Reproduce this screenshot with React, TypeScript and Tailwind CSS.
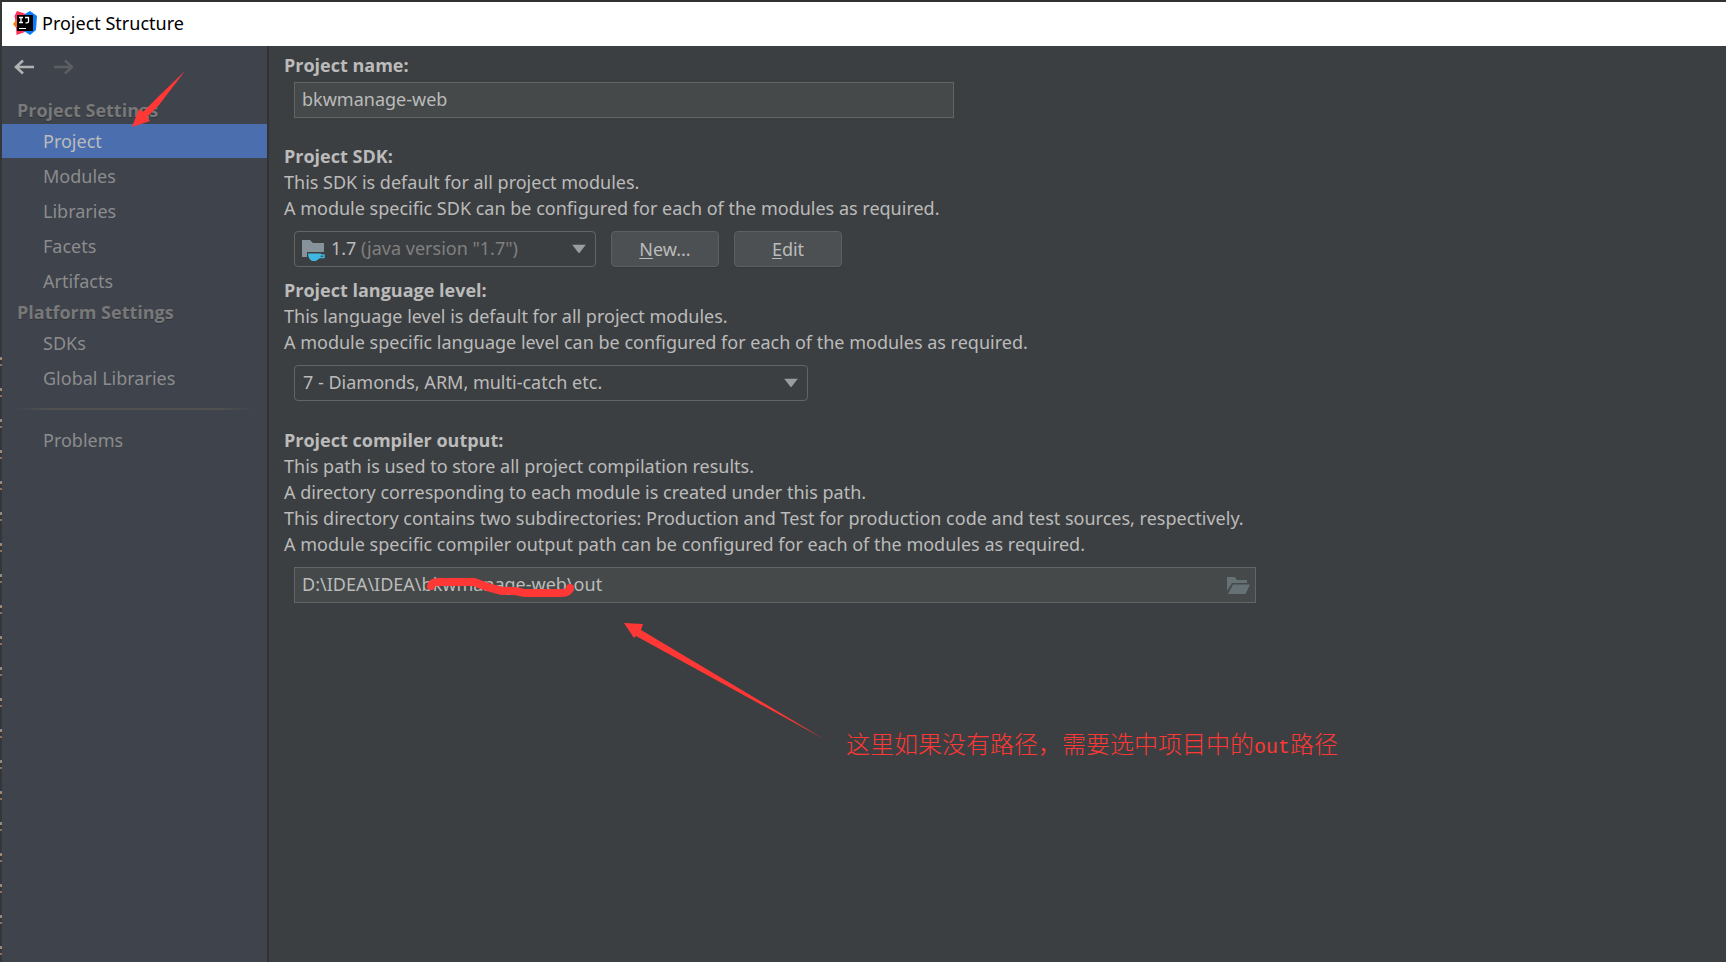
import { useState } from "react";

type NavSection = {
  title: string;
  items: string[];
};

const sections: NavSection[] = [
  { title: "Project Settings", items: ["Project", "Modules", "Libraries", "Facets", "Artifacts"] },
  { title: "Platform Settings", items: ["SDKs", "Global Libraries"] },
];

const compilerNotes = [
  "This path is used to store all project compilation results.",
  "A directory corresponding to each module is created under this path.",
  "This directory contains two subdirectories: Production and Test for production code and test sources, respectively.",
  "A module specific compiler output path can be configured for each of the modules as required.",
];

const AppLogo = () => (
  <svg width="24" height="24" viewBox="0 0 24 24" aria-hidden="true">
    <path d="M4 0 L13 3 L10 10 L3 13 L1.500 5 Z" fill="#fe315d" />
    <path d="M0 13 L4 8 L8 13 L4 18 Z" fill="#f97a12" />
    <path d="M3 16 L12 16 L12 21 L3.500 24 Z" fill="#fe315d" />
    <path d="M12 3 L17 0 L24 5 L23 19 L17 24 L11 20 Z" fill="#087cfa" />
    <rect x="4" y="4" width="16" height="16" fill="#000" />
    <path d="M6 6.500h4M8 6.500v5M6 11.500h4M12 6.500h3.500v4q0 1.300-1.500 1.300h-1.500" fill="none" stroke="#fff" strokeWidth="1.300" />
    <rect x="6" y="17" width="7" height="1" fill="#fff" />
  </svg>
);

const BackArrow = () => (
  <svg width="20" height="16" viewBox="0 0 20 16" fill="none" stroke="currentColor" strokeWidth="2.600" aria-hidden="true">
    <path d="M20 8H2M9 1.500L2 8l7 6.500" />
  </svg>
);

const ForwardArrow = () => (
  <svg width="20" height="16" viewBox="0 0 20 16" fill="none" stroke="currentColor" strokeWidth="2.600" aria-hidden="true">
    <path d="M0 8h18M11 1.500L18 8l-7 6.500" />
  </svg>
);

const JdkIcon = () => (
  <svg width="24" height="22" viewBox="0 0 24 22" aria-hidden="true">
    <path d="M0 0h8l3 3h11v9H5v5H0z" fill="#87939a" />
    <path d="M6 13.500h13v2q0 2.500-3 4l-2 1.500h-4l-2-1.500q-2-2-2-6z" fill="#40b6e0" />
    <path d="M18.500 15h3.500v2.500h-4.500" fill="none" stroke="#40b6e0" strokeWidth="1.400" />
  </svg>
);

const OpenFolderIcon = () => (
  <svg width="23" height="17" viewBox="0 0 23 17" fill="#667176" aria-hidden="true">
    <path d="M0 0h8l2 3h10v3H5L0 14z" />
    <path d="M6 7.500h17L18.500 17H1z" />
  </svg>
);

const Caret = () => (
  <svg
    className="pointer-events-none absolute right-2.5 top-1/2 -translate-y-1/2"
    width="14"
    height="9"
    viewBox="0 0 14 9"
    aria-hidden="true"
  >
    <path d="M0 0h14L7 9z" fill="#9a9da0" />
  </svg>
);

const fieldClass = "h-9 w-full border border-[#646464] bg-[#45494a] px-[7px] pb-0.5 text-[#bbbbbb] outline-none";
const selectClass =
  "h-9 w-full appearance-none rounded-[4px] border border-[#646464] bg-[#3c3f41] pb-0.5 text-[#bbbbbb] outline-none";
const buttonClass =
  "h-9 w-27 rounded-[4px] border border-[#5e6060] bg-[#4c5052] text-[#bbbbbb] shadow-[0_1px_1px_#35383a]";
const headingClass = "block font-['Open_Sans',sans-serif] font-bold leading-[26px]";

const Sidebar = () => {
  const [active, setActive] = useState("Project");

  const renderItem = (item: string) => (
    <li key={item}>
      <button
        onClick={() => setActive(item)}
        className={`block h-[34px] w-full pl-[41px] text-left ${
          item === active ? "bg-[#4b6eaf] text-[#bbbbbb]" : "text-[#8c8c8c]"
        }`}
      >
        {item}
      </button>
    </li>
  );

  return (
    <aside className="relative w-[267px] shrink-0 border-r-2 border-[#323232] bg-[#3e434c]">
      <div className="flex h-[50px] gap-5 pl-3 pt-[13px]">
        <button aria-label="Back" className="h-4 text-[#afb1b3]">
          <BackArrow />
        </button>
        <button aria-label="Forward" className="h-4 text-[#5c5e60]">
          <ForwardArrow />
        </button>
      </div>
      <nav>
        {sections.map((section) => (
          <section key={section.title}>
            <h2 className="h-7 pl-[15px] font-['Open_Sans',sans-serif] font-bold leading-7 text-[#787878] [text-shadow:0_1px_0_#32353b]">
              {section.title}
            </h2>
            <ul className="flex flex-col gap-px">{section.items.map(renderItem)}</ul>
          </section>
        ))}
        <div className="mx-3 my-[13px] h-0.5 bg-[linear-gradient(to_right,transparent,#515151_15%,#515151_85%,transparent)]" />
        <ul>{renderItem("Problems")}</ul>
      </nav>
      <svg className="pointer-events-none absolute left-[130px] top-[25px]" width="54" height="57" viewBox="0 0 54 57" aria-hidden="true">
        <path d="M53 0L27 34 15 46l3 4L0 56 7 38l4 3L28 24z" fill="#ff3835" />
      </svg>
    </aside>
  );
};

const ProjectPanel = () => (
  <main className="min-w-0 flex-1 px-[15px] pt-1.5 text-[#bbbbbb]">
    <section>
      <label htmlFor="project-name" className={headingClass}>
        Project name:
      </label>
      <div className="ml-2.5 mt-1 max-w-[660px]">
        <input id="project-name" className={fieldClass} defaultValue="bkwmanage-web" />
      </div>
    </section>

    <section className="mt-[25px] leading-[26px]">
      <label htmlFor="project-sdk" className={headingClass}>
        Project SDK:
      </label>
      <p>This SDK is default for all project modules.</p>
      <p>A module specific SDK can be configured for each of the modules as required.</p>
      <div className="ml-2.5 mt-2.5 flex gap-[15px]">
        <div className="relative w-[302px]">
          <select id="project-sdk" className={`${selectClass} pl-9`}>
            <option>1.7</option>
          </select>
          <span className="pointer-events-none absolute left-2 top-[9px]">
            <JdkIcon />
          </span>
          <span className="pointer-events-none absolute left-[67px] top-1 text-[#808080]">(java version "1.7")</span>
          <Caret />
        </div>
        <button className={buttonClass}>
          <span className="underline underline-offset-2">N</span>ew...
        </button>
        <button className={buttonClass}>
          <span className="underline underline-offset-2">E</span>dit
        </button>
      </div>
    </section>

    <section className="mt-2.5 leading-[26px]">
      <label htmlFor="language-level" className={headingClass}>
        Project language level:
      </label>
      <p>This language level is default for all project modules.</p>
      <p>A module specific language level can be configured for each of the modules as required.</p>
      <div className="relative ml-2.5 mt-2.5 max-w-[514px]">
        <select id="language-level" className={`${selectClass} pl-2`}>
          <option>7 - Diamonds, ARM, multi-catch etc.</option>
        </select>
        <Caret />
      </div>
    </section>

    <section className="mt-[26px] leading-[26px]">
      <label htmlFor="compiler-output" className={headingClass}>
        Project compiler output:
      </label>
      {compilerNotes.map((note) => (
        <p key={note}>{note}</p>
      ))}
      <div className="relative ml-2.5 mt-2.5 max-w-[962px]">
        <input id="compiler-output" className={fieldClass} defaultValue="D:\IDEA\IDEA\bkwmanage-web\out" />
        <button aria-label="Browse" className="absolute right-1.5 top-[10px]">
          <OpenFolderIcon />
        </button>
        <svg className="pointer-events-none absolute left-[132px] top-[9px]" width="150" height="24" viewBox="0 0 150 24" aria-hidden="true">
          <path
            d="M5 10Q6 6 12 6L48 6Q62 12 76 15Q88 14 98 17L135 17Q143 17 144 12"
            fill="none"
            stroke="#ff3835"
            strokeWidth="8"
            strokeLinecap="round"
            strokeLinejoin="round"
          />
        </svg>
      </div>
    </section>

    <div className="ml-[340px] mt-5 flex items-end gap-[22px] text-[#ff3835]">
      <svg className="mb-[23px]" width="200" height="116" viewBox="0 0 200 116" aria-hidden="true">
        <path d="M0 0L19 1l-2 6L200 116 12 13l-2 2z" fill="currentColor" />
      </svg>
      <p className="font-['Noto_Sans_CJK_SC',sans-serif] text-2xl font-light">
        这里如果没有路径，需要选中项目中的<span className="font-['Liberation_Mono',monospace] text-xl">out</span>路径
      </p>
    </div>
  </main>
);

export default function App() {
  return (
    <div className="flex min-h-screen bg-[#3c3f41] font-['Noto_Sans',sans-serif] text-[18px]">
      {/* sliver of the editor behind the dialog */}
      <div className="w-0.5 shrink-0 bg-[#343638] pt-[357px]">
        <div className="h-full bg-[repeating-linear-gradient(#6d8fa3_0_1px,#a58a63_1px_3px,#343638_3px_7px,#8d6f5d_7px_9px,#343638_9px_31px)]" />
      </div>
      <div className="flex min-w-0 flex-1 flex-col border-t-2 border-[#2f3133]">
        <header className="flex h-11 items-center gap-[5px] bg-white pb-0.5 pl-[11px] text-black">
          <AppLogo />
          <h1>Project Structure</h1>
        </header>
        <div className="flex flex-1">
          <Sidebar />
          <ProjectPanel />
        </div>
      </div>
    </div>
  );
}
